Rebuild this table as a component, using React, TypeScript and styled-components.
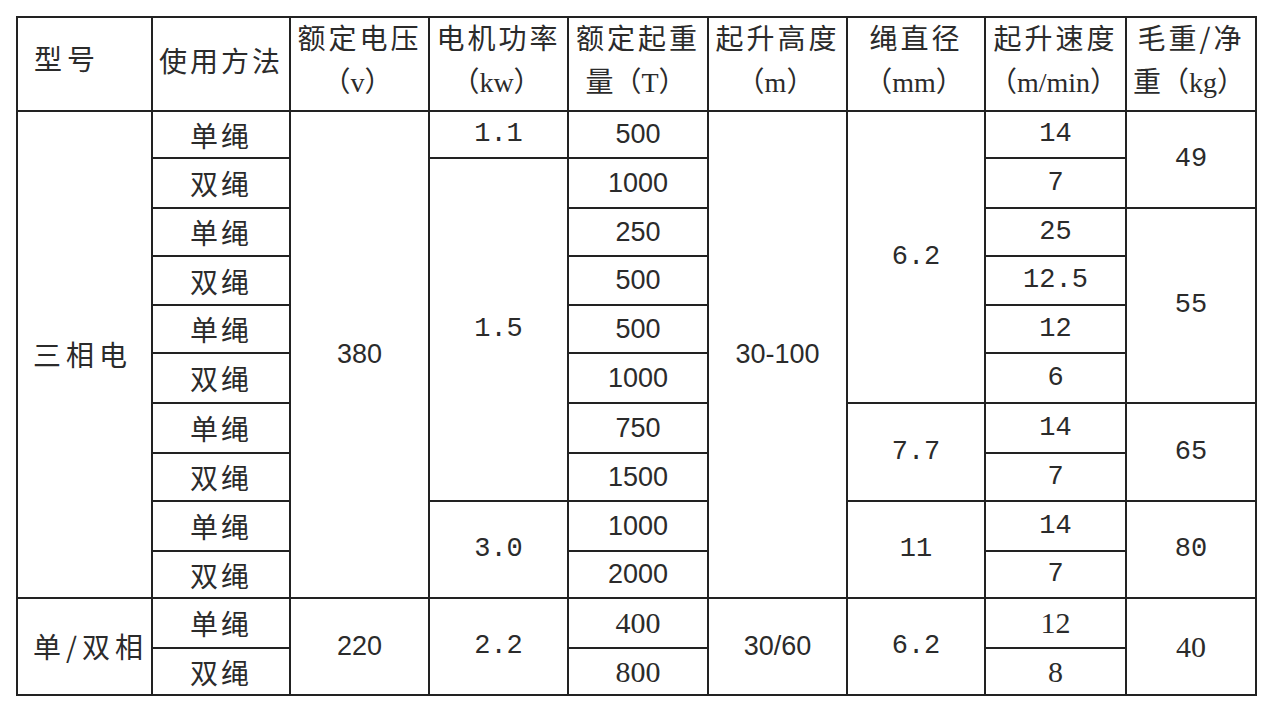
import React from 'react';
import styled, { createGlobalStyle } from 'styled-components';

type Face = 'cjk' | 'sans' | 'mono' | 'serif';

interface CellData {
  t: string;
  rs?: number;
  f?: Face;
  left?: boolean;
}

const widths = [135, 138, 139, 139, 140, 139, 138, 141, 130];

const headers: string[][] = [
  ['型号'],
  ['使用方法'],
  ['额定电压', '（v）'],
  ['电机功率', '（kw）'],
  ['额定起重', '量（T）'],
  ['起升高度', '（m）'],
  ['绳直径', '（mm）'],
  ['起升速度', '（m/min）'],
  ['毛重/净', '重（kg）'],
];

const heights = [47, 50, 48, 49, 48, 50, 50, 48, 50, 47, 50, 47];

const rows: CellData[][] = [
  [
    { t: '三相电', rs: 10, left: true },
    { t: '单绳' },
    { t: '380', rs: 10, f: 'sans' },
    { t: '1.1', f: 'mono' },
    { t: '500', f: 'sans' },
    { t: '30-100', rs: 10, f: 'sans' },
    { t: '6.2', rs: 6, f: 'mono' },
    { t: '14', f: 'mono' },
    { t: '49', rs: 2, f: 'mono' },
  ],
  [{ t: '双绳' }, { t: '1.5', rs: 7, f: 'mono' }, { t: '1000', f: 'sans' }, { t: '7', f: 'mono' }],
  [{ t: '单绳' }, { t: '250', f: 'sans' }, { t: '25', f: 'mono' }, { t: '55', rs: 4, f: 'mono' }],
  [{ t: '双绳' }, { t: '500', f: 'sans' }, { t: '12.5', f: 'mono' }],
  [{ t: '单绳' }, { t: '500', f: 'sans' }, { t: '12', f: 'mono' }],
  [{ t: '双绳' }, { t: '1000', f: 'sans' }, { t: '6', f: 'mono' }],
  [
    { t: '单绳' },
    { t: '750', f: 'sans' },
    { t: '7.7', rs: 2, f: 'mono' },
    { t: '14', f: 'mono' },
    { t: '65', rs: 2, f: 'mono' },
  ],
  [{ t: '双绳' }, { t: '1500', f: 'sans' }, { t: '7', f: 'mono' }],
  [
    { t: '单绳' },
    { t: '3.0', rs: 2, f: 'mono' },
    { t: '1000', f: 'sans' },
    { t: '11', rs: 2, f: 'mono' },
    { t: '14', f: 'mono' },
    { t: '80', rs: 2, f: 'mono' },
  ],
  [{ t: '双绳' }, { t: '2000', f: 'sans' }, { t: '7', f: 'mono' }],
  [
    { t: '单/双相', rs: 2, left: true },
    { t: '单绳' },
    { t: '220', rs: 2, f: 'sans' },
    { t: '2.2', rs: 2, f: 'mono' },
    { t: '400', f: 'serif' },
    { t: '30/60', rs: 2, f: 'sans' },
    { t: '6.2', rs: 2, f: 'mono' },
    { t: '12', f: 'serif' },
    { t: '40', rs: 2, f: 'serif' },
  ],
  [{ t: '双绳' }, { t: '800', f: 'serif' }, { t: '8', f: 'serif' }],
];

const GlobalStyle = createGlobalStyle`
  html, body {
    margin: 0;
    padding: 0;
    background: #fff;
  }
  body {
    font-family: "Noto Sans CJK SC", "Noto Sans", sans-serif;
    color: #2b2b2b;
  }
`;

const Page = styled.div`
  padding: 16px 0 0 16px;
`;

const Table = styled.table`
  border-collapse: collapse;
  table-layout: fixed;
  width: 1239px;
`;

const Col = styled.col<{ $w: number }>`
  width: ${(p) => p.$w}px;
`;

const HeadRow = styled.tr`
  height: 94px;
`;

const Row = styled.tr<{ $h: number }>`
  height: ${(p) => p.$h}px;
`;

const Th = styled.th<{ $left?: boolean }>`
  border: 2px solid #222;
  padding: ${(p) => (p.$left ? '0 0 4px 16px' : '0')};
  font-weight: 400;
  font-size: 28px;
  line-height: 46px;
  letter-spacing: ${(p) => (p.$left ? '5px' : '3px')};
  text-align: ${(p) => (p.$left ? 'left' : 'center')};
  vertical-align: middle;
  white-space: nowrap;
`;

const Line = styled.div`
  display: block;
  margin-top: -8px;
`;

const UnitLine = styled.div`
  display: block;
  font-family: "Liberation Serif", "Noto Sans CJK SC", serif;
  letter-spacing: 0;
  margin-left: -4px;
`;

const faces: Record<Face, string> = {
  cjk: '"Noto Sans CJK SC", "Noto Sans", sans-serif',
  sans: '"Liberation Sans", "Noto Sans", sans-serif',
  mono: '"Liberation Mono", "Noto Sans CJK SC", monospace',
  serif: '"Liberation Serif", "Noto Sans CJK SC", serif',
};

const sizes: Record<Face, string> = {
  cjk: '28px',
  sans: '27px',
  mono: '27px',
  serif: '30px',
};

const Td = styled.td<{ $face: Face; $left?: boolean }>`
  border: 2px solid #222;
  padding: ${(p) => (p.$left ? '0 0 2px 15px' : '0')};
  font-family: ${(p) => faces[p.$face]};
  font-size: ${(p) => sizes[p.$face]};
  letter-spacing: ${(p) => (p.$face !== 'cjk' ? '0' : p.$left ? '5px' : '3px')};
  line-height: 1;
  text-align: ${(p) => (p.$left ? 'left' : 'center')};
  vertical-align: middle;
  white-space: nowrap;
`;

export default function App() {
  return (
    <Page>
      <GlobalStyle />
      <Table>
        <colgroup>
          {widths.map((w, i) => (
            <Col key={i} $w={w} />
          ))}
        </colgroup>
        <thead>
          <HeadRow>
            {headers.map((lines, i) => (
              <Th key={i} $left={i === 0}>
                <Line>{lines[0]}</Line>
                {lines[1] && <UnitLine>{lines[1]}</UnitLine>}
              </Th>
            ))}
          </HeadRow>
        </thead>
        <tbody>
          {rows.map((cells, r) => (
            <Row key={r} $h={heights[r]}>
              {cells.map((c, i) => (
                <Td key={i} rowSpan={c.rs} $face={c.f ?? 'cjk'} $left={c.left}>
                  {c.t}
                </Td>
              ))}
            </Row>
          ))}
        </tbody>
      </Table>
    </Page>
  );
}
